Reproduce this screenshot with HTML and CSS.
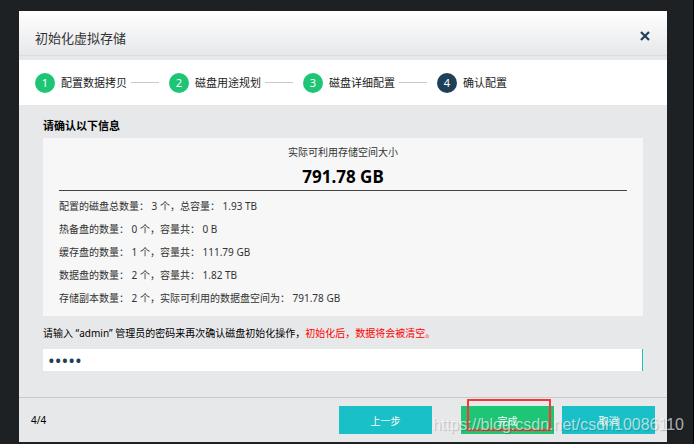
FILE: index.html
```html
<!DOCTYPE html>
<html lang="zh-CN">
<head>
  <meta charset="UTF-8">
  <title>初始化虚拟存储</title>
  <meta name="viewport" content="width=device-width, initial-scale=1.0">
  <link rel="stylesheet" href="styles.css">
</head>
<body>
  <form class="dialog">
    <header class="dialog-header">
      <h1>初始化虚拟存储</h1>
      <button type="button" class="close-button" aria-label="关闭">
        <svg width="10" height="10" viewBox="0 0 10 10">
          <path d="M1 1l8 8M9 1l-8 8" fill="none" stroke="#1f4058" stroke-width="2.2"/>
        </svg>
      </button>
    </header>

    <!-- 步骤条 -->
    <ol class="steps">
      <li class="step"><span class="step-num">1</span>配置数据拷贝</li>
      <li class="step"><span class="step-num">2</span>磁盘用途规划</li>
      <li class="step"><span class="step-num">3</span>磁盘详细配置</li>
      <li class="step active"><span class="step-num">4</span>确认配置</li>
    </ol>

    <main class="dialog-body">
      <h2>请确认以下信息</h2>
      <div class="summary">
        <div class="summary-title">实际可利用存储空间大小</div>
        <div class="summary-size">791.78 GB</div>
        <ul class="summary-list">
          <li>配置的磁盘总数量： 3 个，总容量： 1.93 TB</li>
          <li>热备盘的数量： 0 个，容量共： 0 B</li>
          <li>缓存盘的数量： 1 个，容量共： 111.79 GB</li>
          <li>数据盘的数量： 2 个，容量共： 1.82 TB</li>
          <li>存储副本数量： 2 个，实际可利用的数据盘空间为： 791.78 GB</li>
        </ul>
      </div>

      <label for="password">请输入 “admin” 管理员的密码来再次确认磁盘初始化操作，<span class="warning">初始化后，数据将会被清空。</span></label>
      <input type="password" id="password" value="admin">
    </main>

    <footer class="dialog-footer">
      <span class="page">4/4</span>
      <button type="button" class="btn btn-prev">上一步</button>
      <button type="button" class="btn btn-done">完成<span class="highlight"></span></button>
      <button type="button" class="btn">取消</button>
    </footer>
  </form>

  <div class="watermark">https://blog.csdn.net/csdn10086110</div>
</body>
</html>
```

FILE: styles.css
```css
* {
  box-sizing: border-box;
}

body {
  margin: 0;
  padding: 11px 26px 2px 19px;
  min-height: 100vh;
  border-right: 1px solid #000;
  font-family: 'Noto Sans', 'Noto Sans CJK SC', sans-serif;
  font-size: 10px;
  background-color: #1e2124;
  color: #000;
}

h1,
h2,
ol,
ul {
  margin: 0;
  padding: 0;
  font-size: 11px;
  list-style: none;
}

button {
  padding: 0;
  border: none;
  font-family: inherit;
  cursor: pointer;
}

.dialog {
  background-color: #e7e8ea;
}

.dialog-header {
  display: flex;
  align-items: center;
  justify-content: space-between;
  height: 45px;
  margin-bottom: 4px;
  padding: 9px 17px 0 16px;
  border-bottom: 1px solid #dcdddf;
  background: linear-gradient(#fff, #e7e8ea);
}

.dialog-header h1 {
  font-size: 13px;
  line-height: 18px;
  font-weight: 400;
  color: #333;
}

.close-button {
  display: flex;
  margin-bottom: 4px;
  background: none;
}

.steps {
  display: flex;
  align-items: center;
  height: 45px;
  padding: 0 16px;
  background-color: #fff;
  color: #222;
}

.step {
  display: flex;
  align-items: center;
  line-height: 20px;
  white-space: nowrap;
}

/* 步骤之间的连线 */
.step:not(:last-child)::after {
  content: '';
  width: 28px;
  height: 1px;
  margin: 0 10px 0 4px;
  background-color: #c8c9cb;
}

.step-num {
  width: 20px;
  height: 20px;
  margin-right: 6px;
  border-radius: 50%;
  background-color: #1dc575;
  color: #fff;
  text-align: center;
}

.step.active .step-num {
  background-color: #1f4058;
}

.dialog-body {
  padding: 12px 24px 26px;
}

.dialog-body h2 {
  line-height: 18px;
  margin-bottom: 3px;
}

.summary {
  margin-bottom: 8px;
  padding: 5px 16px 6px;
  background-color: #f7f7f7;
  color: #333;
}

.summary-title {
  line-height: 18px;
  text-align: center;
}

.summary-size {
  padding: 4px 0 2px;
  border-bottom: 1px solid #444;
  font-size: 17px;
  line-height: 23px;
  font-weight: 700;
  text-align: center;
  color: #000;
}

.summary-list {
  padding-top: 4px;
  font-size: 10px;
  line-height: 23px;
}

label {
  display: block;
  margin-bottom: 7px;
  line-height: 18px;
}

.warning {
  color: #f00;
}

input[type="password"] {
  display: block;
  width: 100%;
  height: 22px;
  padding: 0 5px;
  border: none;
  border-right: 1px solid #1ac0c8;
  border-radius: 0;
  outline: none;
  background-color: #fff;
  color: #1f4058;
  font-family: inherit;
  font-size: 18px;
}

.dialog-footer {
  display: flex;
  align-items: center;
  gap: 8px;
  padding: 8px 12px;
  border-top: 1px solid #c8c9cb;
}

.page {
  margin-right: auto;
}

.btn {
  width: 93px;
  height: 28px;
  background-color: #1ac0c8;
  color: #fff;
  font-size: 10px;
}

.btn-prev {
  margin-right: 21px;
}

.btn-done {
  position: relative;
  background-color: #1dc575;
}

/* 完成按钮上的红框 */
.highlight {
  position: absolute;
  top: -7px;
  left: 6px;
  width: 84px;
  height: 32px;
  border: 2px solid #f93535;
}

.watermark {
  position: absolute;
  right: 10px;
  bottom: 10px;
  font-family: 'Liberation Sans', Arial, sans-serif;
  font-size: 16px;
  line-height: 18px;
  color: rgba(255, 255, 255, 0.65);
  text-shadow: 1px 1px 1px rgba(0, 0, 0, 0.2);
  pointer-events: none;
}
```
